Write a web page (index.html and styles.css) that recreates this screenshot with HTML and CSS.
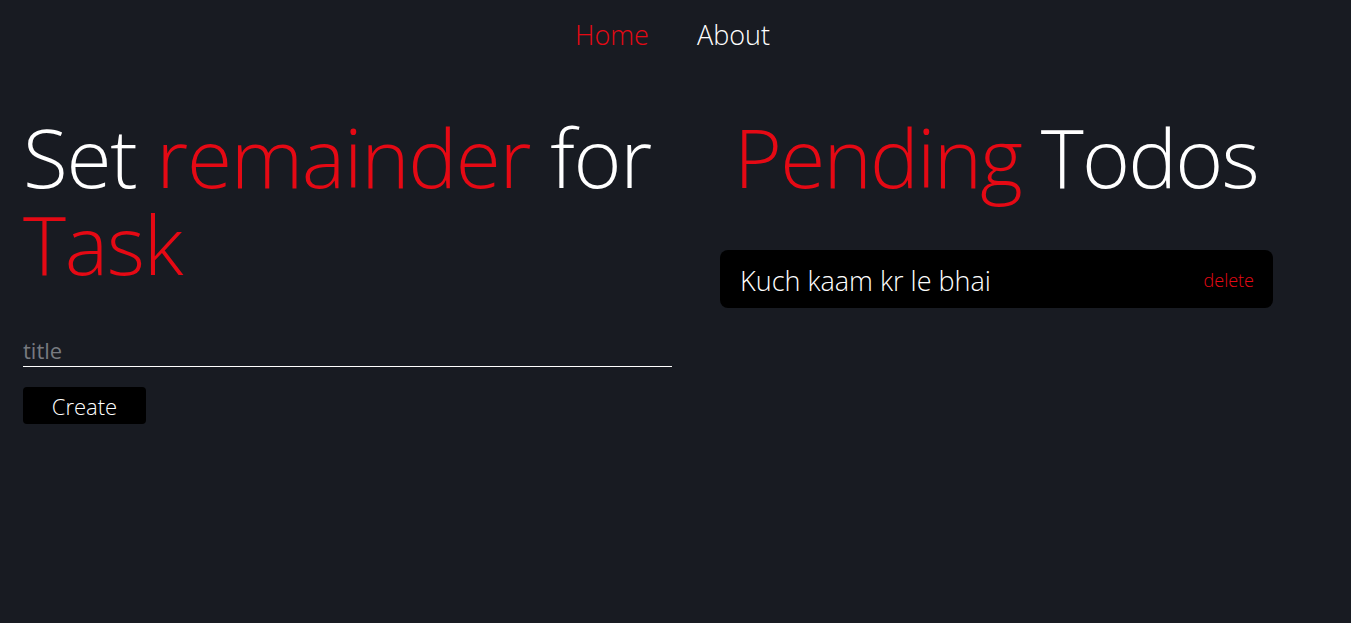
FILE: index.html
```html
<!DOCTYPE html>
<html>
<head>
<meta charset="utf-8">
<link rel="stylesheet" href="styles.css">
</head>
<body>
<nav class="nav">
  <a class="nav-link active">Home</a>
  <a class="nav-link">About</a>
</nav>
<main class="main">
  <section class="left">
    <h1 class="heading">Set <span class="red">remainder</span> for <span class="red">Task</span></h1>
    <input class="title-input" type="text" placeholder="title">
    <button class="create-btn">Create</button>
  </section>
  <section class="right">
    <h1 class="heading heading-right"><span class="red">Pending</span> Todos</h1>
    <div class="todo">
      <span class="todo-text">Kuch kaam kr le bhai</span>
      <span class="todo-delete">delete</span>
    </div>
  </section>
</main>
</body>
</html>
```
FILE: styles.css
```css
* { box-sizing: border-box; }
html, body { margin: 0; padding: 0; }
body {
  background: #181b22;
  color: #fff;
  font-family: "Open Sans", sans-serif;
  font-weight: 300;
  width: 1351px;
  height: 623px;
  overflow: hidden;
}
.red { color: #e50914; }
.nav {
  display: flex;
  justify-content: center;
  gap: 48px;
  padding-top: 15px;
  padding-right: 6px;
  height: 113px;
}
.nav-link {
  font-size: 27px;
  line-height: 40px;
  color: #fff;
  font-weight: 300;
}
.nav-link.active { color: #e50914; }
.main {
  display: flex;
  padding-left: 23px;
  gap: 48px;
}
.left {
  width: 649px;
  display: flex;
  flex-direction: column;
  align-items: flex-start;
}
.right {
  width: 553px;
}
.heading {
  margin: 0;
  font-size: 82px;
  font-weight: 300;
  line-height: 87px;
  letter-spacing: -1.3px;
}
.heading-right { padding-left: 14px; letter-spacing: -1.8px; }
.title-input {
  margin-top: 49px;
  width: 649px;
  background: transparent;
  border: none;
  border-bottom: 1px solid #fff;
  color: #fff;
  font-family: "Open Sans", sans-serif;
  font-size: 22px;
  font-weight: 400;
  padding: 0 0 2px 0;
  line-height: 28px;
  outline: none;
}
.title-input::placeholder { color: #777a80; }
.create-btn {
  margin-top: 20px;
  width: 123px;
  height: 37px;
  background: #000;
  color: #fff;
  border: none;
  border-radius: 4px;
  font-family: "Open Sans", sans-serif;
  font-weight: 300;
  font-size: 22px;
  padding: 0;
}
.todo {
  margin-top: 50px;
  height: 58px;
  background: #000;
  border-radius: 8px;
  display: flex;
  align-items: center;
  justify-content: space-between;
  padding: 2px 19px 0 20px;
}
.todo-text { font-size: 27px; }
.todo-delete { color: #e50914; font-size: 18px; }
```
